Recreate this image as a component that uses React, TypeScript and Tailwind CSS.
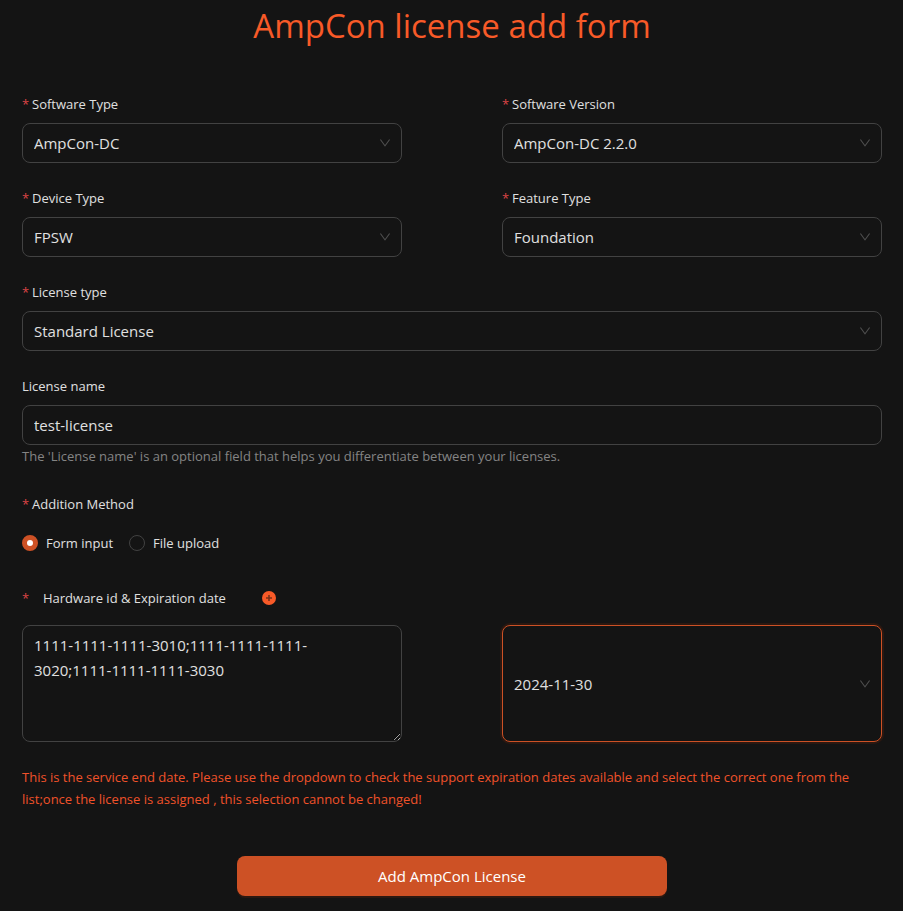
import React, { useState } from "react";

const controlStyle =
  "block w-full rounded-lg border border-[#424242] bg-[#141414] pl-[11px] text-[15px] text-[#e0e0e0] outline-none";

function RequiredMark() {
  return (
    <span aria-hidden="true" className="inline-block w-[10px] text-[13px] text-[#dc4446]">
      *
    </span>
  );
}

function DownIcon() {
  return (
    <svg
      viewBox="64 64 896 896"
      className="pointer-events-none absolute top-1/2 right-[11px] h-3 w-3 -translate-y-1/2 fill-[#4f4f4f]"
      aria-hidden="true"
    >
      <path d="M884 256h-75c-5.1 0-9.9 2.5-12.9 6.6L512 654.2 227.9 262.6c-3-4.1-7.8-6.6-12.9-6.6h-75c-6.5 0-10.3 7.4-6.5 12.7l352.6 486.1c12.8 17.6 39 17.6 51.7 0l352.6-486.1c3.9-5.3.1-12.7-6.4-12.7z" />
    </svg>
  );
}

interface SelectFieldProps {
  id: string;
  label: string;
  options: string[];
}

function SelectField({ id, label, options }: SelectFieldProps) {
  return (
    <div>
      <label htmlFor={id} className="mb-2 block">
        <RequiredMark />
        {label}
      </label>
      <div className="relative">
        <select id={id} className={`${controlStyle} h-10 appearance-none pr-8`}>
          {options.map((option) => (
            <option key={option}>{option}</option>
          ))}
        </select>
        <DownIcon />
      </div>
    </div>
  );
}

interface RadioProps {
  label: string;
  value: string;
  checked: boolean;
  onSelect: (value: string) => void;
}

function Radio({ label, value, checked, onSelect }: RadioProps) {
  return (
    <label className="flex items-center gap-2">
      <input
        type="radio"
        name="method"
        value={value}
        checked={checked}
        onChange={() => onSelect(value)}
        className="h-4 w-4 appearance-none rounded-full border border-[#424242] checked:border-[5px] checked:border-[#cd5125] checked:bg-white"
      />
      {label}
    </label>
  );
}

export default function App() {
  const [method, setMethod] = useState("form");

  return (
    <main className="min-h-screen bg-[#141414] pr-[21px] pb-[15px] pl-[22px] font-['Open_Sans','Noto_Sans',sans-serif] text-[13px] leading-[22px] text-[#e0e0e0]">
      {/* Title */}
      <h1 className="mb-11 pt-[2px] text-center text-[33px] leading-[47px] text-[#f85a28]">
        AmpCon license add form
      </h1>

      <form className="flex flex-col gap-6" onSubmit={(e) => e.preventDefault()}>
        <div className="grid grid-cols-2 gap-x-[100px] gap-y-6">
          <SelectField id="software-type" label="Software Type" options={["AmpCon-DC"]} />
          <SelectField id="software-version" label="Software Version" options={["AmpCon-DC 2.2.0"]} />
          <SelectField id="device-type" label="Device Type" options={["FPSW"]} />
          <SelectField id="feature-type" label="Feature Type" options={["Foundation"]} />
        </div>

        <SelectField id="license-type" label="License type" options={["Standard License"]} />

        <div>
          <label htmlFor="license-name" className="mb-2 block">
            License name
          </label>
          <input id="license-name" type="text" defaultValue="test-license" className={`${controlStyle} h-10 pr-[11px]`} />
          <p className="pb-[2px] text-[#848484]">
            The 'License name' is an optional field that helps you differentiate between your licenses.
          </p>
        </div>

        {/* Addition method */}
        <fieldset>
          <legend className="mb-2">
            <RequiredMark />
            Addition Method
          </legend>
          <div className="flex h-10 items-center gap-4">
            <Radio label="Form input" value="form" checked={method === "form"} onSelect={setMethod} />
            <Radio label="File upload" value="file" checked={method === "file"} onSelect={setMethod} />
          </div>
        </fieldset>

        {/* Hardware id & expiration date */}
        <div>
          <div className="mb-4 flex items-center gap-9">
            <label htmlFor="hardware-id" className="flex gap-[11px]">
              <RequiredMark />
              Hardware id &amp; Expiration date
            </label>
            <button type="button" aria-label="Add hardware id">
              <svg viewBox="0 0 14 14" className="h-[14px] w-[14px]" aria-hidden="true">
                <circle cx="7" cy="7" r="7" fill="#f85a28" />
                <path d="M7 4v6M4 7h6" stroke="#7a3219" strokeWidth="1.6" />
              </svg>
            </button>
          </div>
          <div className="grid grid-cols-2 gap-x-[100px]">
            <textarea
              id="hardware-id"
              rows={4}
              defaultValue="1111-1111-1111-3010;1111-1111-1111-3020;1111-1111-1111-3030"
              className={`${controlStyle} resize-y pt-[7px] pr-5 pb-2 leading-[25px] scheme-dark`}
            />
            <div className="relative">
              <select
                aria-label="Expiration date"
                className="block h-full w-full appearance-none rounded-lg border border-[#cd5125] bg-[#141414] pr-8 pl-[11px] text-[15px] text-[#e0e0e0] shadow-[0_0_0_2px_#2b1811] outline-none"
              >
                <option>2024-11-30</option>
              </select>
              <DownIcon />
            </div>
          </div>
        </div>

        <p className="text-[#f0522a]">
          This is the service end date. Please use the dropdown to check the support expiration dates available
          and select the correct one from the list;once the license is assigned , this selection cannot be
          changed!
        </p>

        <button
          type="submit"
          className="mx-auto mt-[22px] h-10 w-1/2 rounded-lg bg-[#cd5125] text-[15px] text-white shadow-[0_2px_0_#2b1811]"
        >
          Add AmpCon License
        </button>
      </form>
    </main>
  );
}
